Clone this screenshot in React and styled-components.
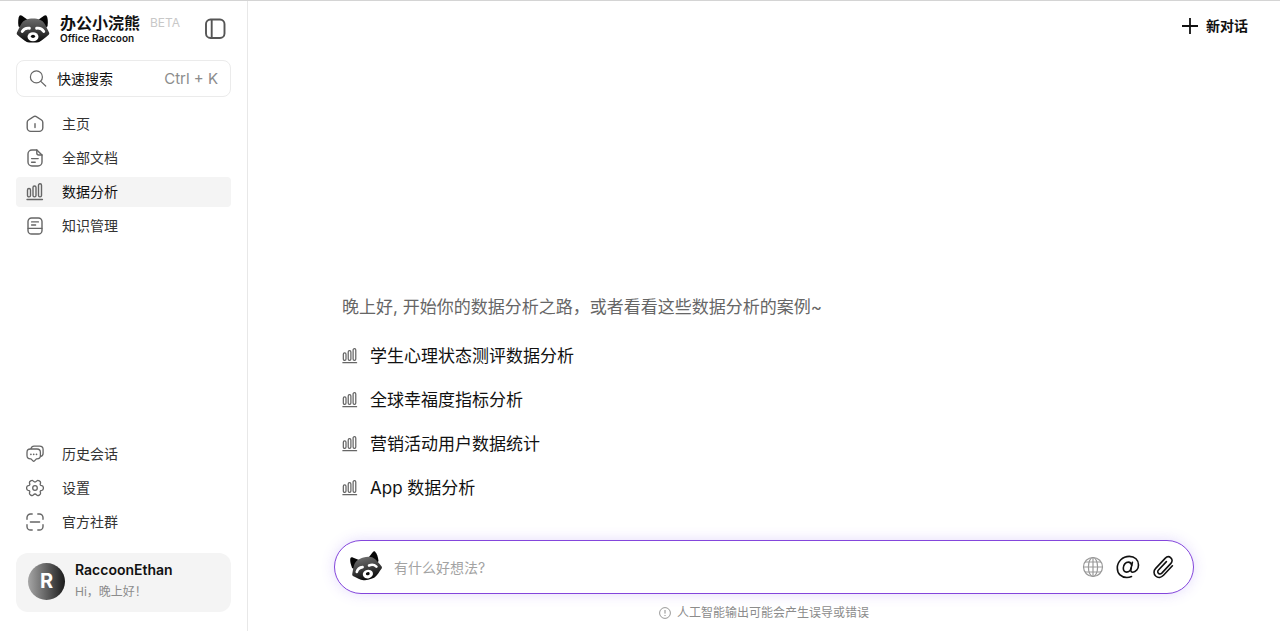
import { useState } from "react";
import styled, { createGlobalStyle, css } from "styled-components";

const navItems = [
  { id: "home", label: "主页", Icon: HomeIcon },
  { id: "docs", label: "全部文档", Icon: DocIcon },
  { id: "analysis", label: "数据分析", Icon: ChartIcon },
  { id: "knowledge", label: "知识管理", Icon: BookIcon },
];

const footerItems = [
  { id: "history", label: "历史会话", Icon: ChatIcon },
  { id: "settings", label: "设置", Icon: GearIcon },
  { id: "community", label: "官方社群", Icon: ScanIcon },
];

const cases = [
  "学生心理状态测评数据分析",
  "全球幸福度指标分析",
  "营销活动用户数据统计",
  "App 数据分析",
];

function Raccoon({ size = 36, tilt = 0 }) {
  return (
    <svg width={size} height={size} viewBox="0 0 36 36" aria-hidden="true">
      <defs>
        <linearGradient id={`face${tilt}`} x1="0" y1="0" x2="0" y2="1">
          <stop offset="0" stopColor="#6a6a6a" />
          <stop offset="0.45" stopColor="#444" />
          <stop offset="1" stopColor="#080808" />
        </linearGradient>
      </defs>
      <g transform={`rotate(${tilt} 18 18)`}>
        <path d="M2.6 15C2 10 2.3 6 3.6 4 4.3 3 5.4 3.2 6.4 3.9L13 8.8 5 17z" fill="#060606" />
        <path d="M33.4 15c.6-5 .3-9-1-11-.7-1-1.8-.8-2.8-.1L23 8.8 31 17z" fill="#060606" />
        <path
          d="M18 7c5.5 0 10 1.7 12.3 5.4 1.6 2.6 3.2 6 4.7 9.3.5 1.1.2 2-.7 2.7-3.3 2.7-6.3 5.8-9.7 7.3-2 .9-11.2.9-13.2 0-3.400-1.500-6.400-4.600-9.700-7.300-.9-.7-1.200-1.600-.7-2.700 1.500-3.300 3.100-6.700 4.700-9.300C8 8.700 12.500 7 18 7z"
          fill={`url(#face${tilt})`}
        />
        <path d="M6.6 20.6c1.2-2 3.6-4 7.600-3.400" stroke="#fff" strokeWidth="3" strokeLinecap="round" fill="none" />
        <path d="M29.4 20.6c-1.2-2-3.6-4-7.600-3.400" stroke="#fff" strokeWidth="3" strokeLinecap="round" fill="none" />
        <ellipse cx="18" cy="26.2" rx="5.8" ry="4.8" fill="#fff" />
        <ellipse cx="18" cy="25.8" rx="2.2" ry="1.8" fill="#0a0a0a" />
      </g>
    </svg>
  );
}

function Line({ size = 18, width = 1.4, children }) {
  return (
    <svg
      width={size}
      height={size}
      viewBox="0 0 18 18"
      fill="none"
      stroke="currentColor"
      strokeWidth={width}
      strokeLinecap="round"
      strokeLinejoin="round"
      aria-hidden="true"
    >
      {children}
    </svg>
  );
}

function HomeIcon() {
  return (
    <Line>
      <path d="M1.2 7.5c0-1.1.4-1.9 1.3-2.5L7.3 1.8c1-.7 2.4-.7 3.4 0L15.5 5c.9.6 1.3 1.4 1.3 2.500v5.300a3.600 3.600 0 0 1-3.600 3.600H4.800a3.600 3.600 0 0 1-3.600-3.600z" />
      <path d="M9 8.700v3.800" />
    </Line>
  );
}

function DocIcon() {
  return (
    <Line>
      <path d="M10.8 1H6a4 4 0 0 0-4 4v8a4 4 0 0 0 4 4h6a4 4 0 0 0 4-4V6z" />
      <path d="M10.8 1v3a2 2 0 0 0 2 2H16M5.6 9.6h6.600M5.600 13.200h3.600" />
    </Line>
  );
}

function ChartIcon({ size }) {
  return (
    <Line size={size}>
      <rect x="1.5" y="5.5" width="3" height="8.4" rx="1.4" />
      <rect x="7" y="3" width="3" height="10.9" rx="1.4" />
      <rect x="12.5" y="0.8" width="3" height="13.1" rx="1.4" />
      <path d="M1 16.5h15.400" />
    </Line>
  );
}

function BookIcon() {
  return (
    <Line>
      <rect x="2" y="1" width="14" height="16" rx="3.6" />
      <path d="M2.2 11.4h13.600M5.600 4.900h6.800M5.600 8h4" />
    </Line>
  );
}

function ChatIcon() {
  return (
    <Line width={1.3}>
      <path d="M5 3.6c.4-1.6 1.3-2.5 3-2.500h5.600c2.200 0 3.500 1.300 3.500 3.500v3.600c0 1.800-.8 2.900-2.500 3.200" />
      <path d="M4.4 4h6.600c2.200 0 3.400 1.200 3.400 3.400v3.200c0 2.200-1.200 3.300-3.400 3.300h-.6l-1.900 2c-.5.500-1.100.5-1.600 0l-1.900-2h-.6c-2.200 0-3.400-1.100-3.400-3.300V7.400C1 5.200 2.200 4 4.400 4z" />
      <path d="M4.900 9.300h.01M7.700 9.300h.01M10.500 9.300h.01" strokeWidth="1.7" />
    </Line>
  );
}

function GearIcon() {
  return (
    <Line width={1.3}>
      <path d="M17.4 9C17.400 10.600 17 11.100 15.800 11.300 14.300 11.500 13.900 12.300 14.400 13.500 14.900 14.700 14.600 15.300 13.300 16.100 12 16.900 11.300 16.800 10.600 15.900 9.600 14.700 8.400 14.700 7.400 15.900 6.700 16.800 6 16.900 4.700 16.100 3.400 15.300 3.100 14.700 3.600 13.500 4.100 12.300 3.700 11.500 2.200 11.300 1 11.100.6 10.600.6 9 .6 7.400 1 6.900 2.200 6.700 3.700 6.500 4.100 5.700 3.600 4.500 3.100 3.300 3.400 2.700 4.700 1.900 6 1.100 6.700 1.200 7.400 2.100 8.400 3.300 9.600 3.300 10.600 2.100 11.300 1.200 12 1.100 13.300 1.900 14.600 2.700 14.900 3.300 14.400 4.500 13.900 5.700 14.300 6.500 15.800 6.700 17 6.900 17.400 7.400 17.400 9z" />
      <circle cx="9" cy="9" r="2.3" />
    </Line>
  );
}

function ScanIcon() {
  return (
    <Line>
      <path d="M1 6.2V4.600A3.600 3.600 0 0 1 4.600 1h1.600M11.800 1h1.600A3.600 3.600 0 0 1 17 4.600v1.600M17 11.800v1.600a3.600 3.600 0 0 1-3.600 3.600h-1.600M6.200 17H4.600A3.600 3.600 0 0 1 1 13.400v-1.600M4.400 9h9.200" />
    </Line>
  );
}

const App = () => {
  const [active, setActive] = useState("analysis");
  const [message, setMessage] = useState("");

  const renderItem = ({ id, label, Icon }) => (
    <NavButton key={id} type="button" $active={active === id} onClick={() => setActive(id)}>
      <Icon />
      {label}
    </NavButton>
  );

  return (
    <Page>
      <GlobalStyle />
      <Sidebar>
        <Brand>
          <Raccoon size={34} />
          <BrandText>
            <BrandName>办公小浣熊</BrandName>
            <BrandSub>Office Raccoon</BrandSub>
          </BrandText>
          <Beta>BETA</Beta>
          <IconButton type="button" aria-label="收起侧栏">
            <svg width="22" height="22" viewBox="0 0 22 22" fill="none" stroke="#555" strokeWidth="1.9">
              <rect x="2" y="1.5" width="18.5" height="18.5" rx="4.5" />
              <path d="M7.7 1.5V20" />
            </svg>
          </IconButton>
        </Brand>

        <SearchButton type="button">
          <Line width={1.2}>
            <circle cx="7.4" cy="6.9" r="6" />
            <path d="M11.8 11.4l4.900 4.600" />
          </Line>
          快速搜索
          <Shortcut>Ctrl + K</Shortcut>
        </SearchButton>

        <Nav>{navItems.map(renderItem)}</Nav>
        <BottomNav>{footerItems.map(renderItem)}</BottomNav>

        <UserCard type="button">
          <Avatar>R</Avatar>
          <UserText>
            <UserName>RaccoonEthan</UserName>
            <UserHint>Hi，晚上好！</UserHint>
          </UserText>
        </UserCard>
      </Sidebar>

      <Main>
        <TopBar>
          <NewChat type="button">
            <svg width="16" height="16" viewBox="0 0 16 16" stroke="#111" strokeWidth="1.8" aria-hidden="true">
              <path d="M8 0v16M0 8h16" />
            </svg>
            新对话
          </NewChat>
        </TopBar>

        <Content>
          <Greeting>晚上好, 开始你的数据分析之路，或者看看这些数据分析的案例~</Greeting>
          <CaseList>
            {cases.map((item) => (
              <li key={item}>
                <CaseButton type="button">
                  <ChartIcon size={16} />
                  {item}
                </CaseButton>
              </li>
            ))}
          </CaseList>

          <Composer onSubmit={(e) => e.preventDefault()}>
            <Raccoon size={32} tilt={-15} />
            <MessageInput
              aria-label="消息"
              placeholder="有什么好想法?"
              value={message}
              onChange={(e) => setMessage(e.target.value)}
            />
            <Tools>
              <IconButton type="button" aria-label="联网搜索">
                <svg width="22" height="22" viewBox="0 0 22 22" fill="none" stroke="#999" strokeWidth="1.2">
                  <circle cx="11" cy="11" r="9.5" />
                  <ellipse cx="11" cy="11" rx="4.6" ry="9.5" />
                  <path d="M11 1.500v19M1.500 11h19M3 6h16M3 16h16" />
                </svg>
              </IconButton>
              <IconButton type="button" aria-label="提及">
                <svg width="24" height="24" viewBox="0 0 24 24" fill="none" stroke="#111" strokeWidth="1.6" strokeLinecap="round">
                  <path d="M16.4 7.3l-1.500 6.900c-.4 2 .4 3 1.900 3 3 0 5.700-3.200 5.700-7.300C22.500 4.900 18.800 1.400 13.300 1.400 6.600 1.400 1.300 6.500 1.300 13c0 5.700 3.900 9.500 9.600 9.500 1.700 0 3.200-.3 4.600-.9" />
                  <path d="M15.7 10.3c-.3-2-1.500-3.200-3.300-3.200-2.800 0-5.100 2.700-5.100 6 0 2.500 1.300 4 3.300 4 2.300 0 4-1.600 4.600-4.200" />
                </svg>
              </IconButton>
              <IconButton type="button" aria-label="添加附件">
                <svg width="22" height="24" viewBox="0 0 22 24" fill="none" stroke="#111" strokeWidth="1.6" strokeLinecap="round" strokeLinejoin="round">
                  <path d="M20.4 10.8l-8.900 9.500c-2.300 2.400-5.500 2.800-7.800.7-2.300-2.200-2.200-5.300 0-7.600l9.400-10c1.700-1.800 4-2.100 5.700-.6 1.700 1.600 1.700 3.900.1 5.600l-9.100 9.700c-1 1-2.300 1.100-3.300.2s-1-2.300 0-3.300l7.900-8.400" />
                </svg>
              </IconButton>
            </Tools>
          </Composer>

          <Notice>
            <svg width="12" height="12" viewBox="0 0 12 12" fill="none" stroke="currentColor" aria-hidden="true">
              <circle cx="6" cy="6" r="5.4" strokeWidth="0.9" />
              <path d="M6 3v3.600M6 8v1" />
            </svg>
            人工智能输出可能会产生误导或错误
          </Notice>
        </Content>
      </Main>
    </Page>
  );
};

const GlobalStyle = createGlobalStyle`
  * {
    box-sizing: border-box;
  }

  body {
    margin: 0;
    background: #fff;
    color: #111;
    font-family: Inter, "Noto Sans CJK SC", sans-serif;
    font-size: 14px;
  }

  button,
  input {
    border: 0;
    padding: 0;
    background: none;
    color: inherit;
    font: inherit;
  }

  button {
    cursor: pointer;
  }

  svg {
    display: block;
    flex-shrink: 0;
  }
`;

const Page = styled.div`
  display: flex;
  min-height: 100vh;
  border-top: 1px solid #d4d4d4;
`;

const Sidebar = styled.aside`
  display: flex;
  flex-direction: column;
  flex: 0 0 248px;
  padding: 12px 16px 19px;
  border-right: 1px solid #e8e8e8;
`;

const Brand = styled.header`
  display: flex;
  align-items: center;
  height: 32px;
  margin-bottom: 15px;
  padding-right: 5px;
`;

const BrandText = styled.div`
  margin-left: 10px;
  white-space: nowrap;
`;

const BrandName = styled.div`
  font-size: 16px;
  font-weight: 700;
  line-height: 18px;
`;

const BrandSub = styled.div`
  font-size: 10px;
  font-weight: 600;
  line-height: 12px;
`;

const Beta = styled.span`
  align-self: flex-start;
  margin-left: 10px;
  color: #c8c8c8;
  font-size: 12px;
  line-height: 20px;
`;

const IconButton = styled.button`
  display: flex;

  ${Brand} & {
    margin-left: auto;
  }
`;

const SearchButton = styled.button`
  display: flex;
  align-items: center;
  height: 37px;
  padding: 0 12px;
  border: 1px solid #ebebeb;
  border-radius: 8px;
  gap: 10px;
  line-height: 20px;

  svg {
    color: #666;
  }
`;

const Shortcut = styled.span`
  margin-left: auto;
  color: #8c8c8c;
  font-size: 15px;
`;

const Nav = styled.nav`
  display: flex;
  flex-direction: column;
  gap: 4px;
  margin-top: 12px;
`;

const BottomNav = styled(Nav)`
  margin-top: auto;
  margin-bottom: 16px;
`;

const NavButton = styled.button`
  display: flex;
  align-items: center;
  gap: 18px;
  height: 30px;
  padding: 0 10px;
  border-radius: 4px;
  color: #333;
  line-height: 20px;

  svg {
    color: #666;
  }

  ${({ $active }) =>
    $active &&
    css`
      background: #f4f4f4;
      color: #111;
    `}
`;

const UserCard = styled.button`
  display: flex;
  align-items: center;
  gap: 10px;
  padding: 6px 12px 9px;
  border-radius: 12px;
  background: #f4f4f4;
  text-align: left;
`;

const Avatar = styled.span`
  display: flex;
  align-items: center;
  justify-content: center;
  width: 37px;
  height: 37px;
  border-radius: 50%;
  background: linear-gradient(to right, #a6a6a6, #1c1c1c);
  color: #fff;
  font-size: 20px;
  font-weight: 700;
`;

const UserText = styled.span`
  display: flex;
  flex-direction: column;
  line-height: 22px;
`;

const UserName = styled.strong`
  font-weight: 600;
`;

const UserHint = styled.span`
  color: #8c8c8c;
  font-size: 12px;
`;

const Main = styled.main`
  display: flex;
  flex: 1;
  flex-direction: column;
  min-width: 0;
`;

const TopBar = styled.div`
  display: flex;
  justify-content: flex-end;
  padding: 15px 32px;
`;

const NewChat = styled.button`
  display: flex;
  align-items: center;
  gap: 8px;
  font-weight: 700;
  line-height: 20px;
`;

const Content = styled.div`
  display: flex;
  flex-direction: column;
  width: calc(100% - 32px);
  max-width: 860px;
  margin: auto auto 0;
  padding-bottom: 8px;
`;

const Greeting = styled.p`
  margin: 0 8px 15px;
  color: #666;
  font-size: 17px;
  line-height: 24px;
`;

const CaseList = styled.ul`
  margin: 0 8px 30px;
  padding: 0;
  list-style: none;
`;

const CaseButton = styled.button`
  display: flex;
  align-items: center;
  gap: 12px;
  height: 44px;
  font-size: 17px;
  line-height: 24px;

  svg {
    color: #666;
  }
`;

const Composer = styled.form`
  display: flex;
  align-items: center;
  gap: 12px;
  height: 54px;
  padding: 0 19px 0 15px;
  border: 1px solid #8446dc;
  border-radius: 27px;
  background: #fff;
  box-shadow: 0 0 14px rgba(120, 80, 240, 0.2);
`;

const MessageInput = styled.input`
  flex: 1;
  min-width: 0;
  outline: none;

  &::placeholder {
    color: #a3a3a3;
    opacity: 1;
  }
`;

const Tools = styled.div`
  display: flex;
  align-items: center;
  gap: 12px;
`;

const Notice = styled.p`
  display: flex;
  align-items: center;
  justify-content: center;
  gap: 6px;
  margin: 9px 0 0;
  color: #8c8c8c;
  font-size: 12px;
  line-height: 20px;
`;

export default App;
